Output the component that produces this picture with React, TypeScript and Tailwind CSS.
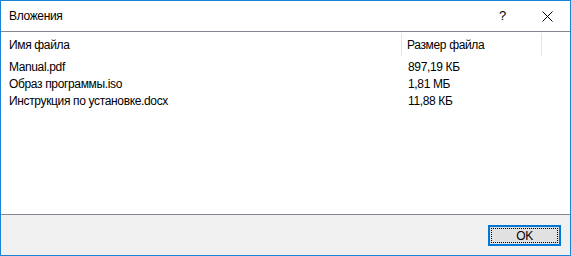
import React from "react";

const files = [
  { name: "Manual.pdf", size: "897,19 КБ" },
  { name: "Образ программы.iso", size: "1,81 МБ" },
  { name: "Инструкция по установке.docx", size: "11,88 КБ" },
];

export default function App() {
  return (
    <div
      className="w-[571px] h-[256px] flex flex-col border border-[#1883d7] bg-white text-[12px] tracking-[-0.35px] text-black overflow-hidden"
      style={{ fontFamily: '"Liberation Sans", Arial, sans-serif' }}
    >
      {/* Title bar */}
      <div className="h-[30px] flex items-center shrink-0">
        <span className="pl-[8px] flex-1 leading-none pb-[1px]">Вложения</span>
        <div className="w-[46px] h-full flex items-center justify-center text-[13px] pl-[3px]">?</div>
        <div className="w-[46px] h-full flex items-center justify-center">
          <svg width="11" height="11" viewBox="0 0 11 11">
            <path d="M0.5 0.5 L10.5 10.5 M10.5 0.5 L0.5 10.5" stroke="#000" strokeWidth="1" />
          </svg>
        </div>
      </div>

      {/* List */}
      <div className="flex-1 border-t border-b border-[#828790] flex flex-col">
        <div className="h-[25px] flex items-stretch">
          <div className="w-[401px] flex items-center pl-[8px] border-r border-[#e5e5e5] my-[1px]">Имя файла</div>
          <div className="w-[140px] flex items-center pl-[5px] border-r border-[#e5e5e5] my-[1px]">Размер файла</div>
          <div className="flex-1" />
        </div>
        <div className="pt-[1px]">
          {files.map((f) => (
            <div key={f.name} className="h-[17px] flex items-center">
              <div className="w-[401px] pl-[8px]">{f.name}</div>
              <div className="pl-[6px]">{f.size}</div>
            </div>
          ))}
        </div>
      </div>

      {/* Footer */}
      <div className="h-[40px] shrink-0 bg-[#f0f0f0] flex items-center justify-end pr-[9px] pt-[1px]">
        <button className="w-[73px] h-[21px] border-2 border-[#0078d7] bg-[#e1e1e1] p-[1px] flex">
          <span className="flex-1 flex items-center justify-center border border-dotted border-black leading-none">
            OK
          </span>
        </button>
      </div>
    </div>
  );
}
